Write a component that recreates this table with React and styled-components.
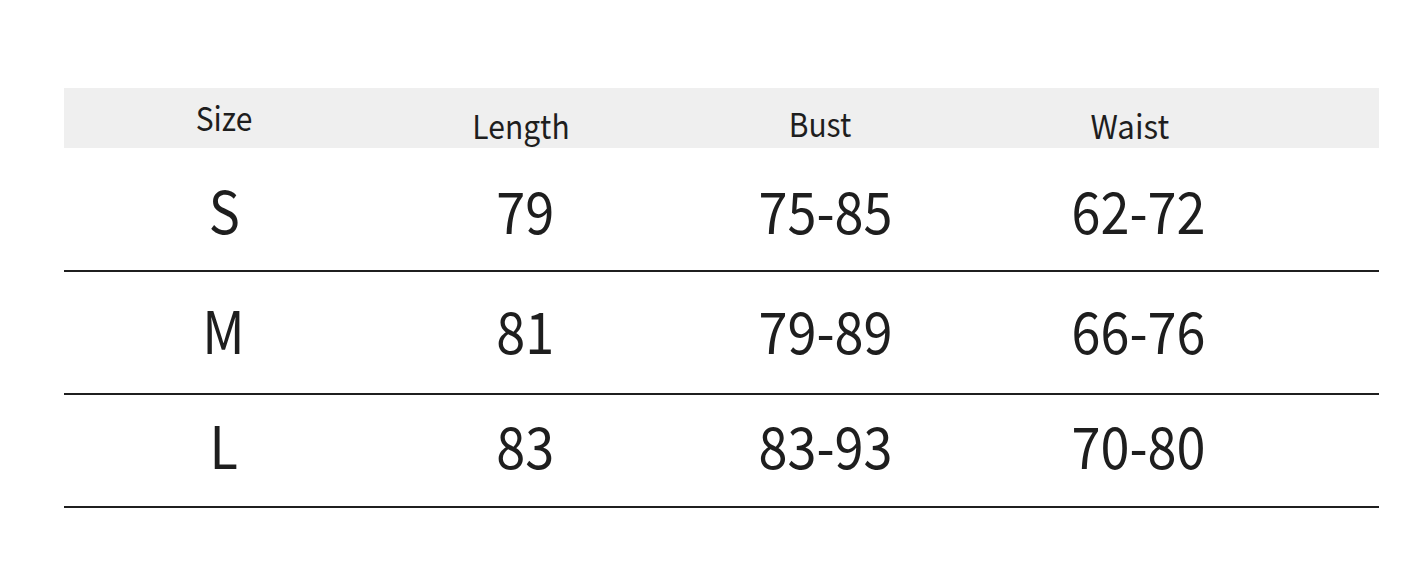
import React from "react";
import styled, { createGlobalStyle } from "styled-components";

const Global = createGlobalStyle`
  html, body { margin: 0; padding: 0; background: #ffffff; }
  body { font-family: "Noto Sans CJK SC", "Noto Sans", sans-serif; color: #222; }
`;

const Page = styled.div`
  width: 1409px;
  height: 588px;
  padding: 88px 30px 0 64px;
  box-sizing: border-box;
`;

const Table = styled.div`
  width: 1315px;
  display: flex;
  flex-direction: column;
`;

const cols = "320px 274px 324px 296px 1fr";

const HeadRow = styled.div`
  display: grid;
  grid-template-columns: ${cols};
  height: 60px;
  background: #efefef;
`;

const HeadCell = styled.div`
  display: flex;
  justify-content: center;
  align-items: flex-start;
  padding-top: ${(p) => p.$top}px;
  padding-left: ${(p) => p.$dx || 0}px;
  font-size: 30px;
  line-height: 1;
  color: #1e1e1e;
  span { display: inline-block; transform: scale(${(p) => p.$sx || 1}, 1.1); }
`;

const Row = styled.div`
  display: grid;
  grid-template-columns: ${cols};
  height: ${(p) => p.$h}px;
  padding-bottom: ${(p) => p.$pb}px;
  box-sizing: border-box;
  border-bottom: 2px solid #1f1f1f;
  & { height: ${(p) => p.$h + 2}px; }
`;

const Cell = styled.div`
  display: flex;
  justify-content: center;
  align-items: center;
  padding-left: ${(p) => p.$dx || 0}px;
  font-size: 58px;
  line-height: 1;
  color: #1e1e1e;
  span { display: inline-block; transform: scaleX(0.9); }
`;

const heads = [
  { t: "Size", top: 14, dx: 0 },
  { t: "Length", top: 22, dx: -2 },
  { t: "Bust", top: 20, dx: -5 },
  { t: "Waist", top: 22, dx: -12, sx: 1.04 },
];

const rows = [
  { h: 122, pb: 0, v: ["S", "79", "75-85", "62-72"] },
  { h: 121, pb: 8, v: ["M", "81", "79-89", "66-76"] },
  { h: 111, pb: 14, v: ["L", "83", "83-93", "70-80"] },
];

const dxs = [0, 8, 10, 16];

export default function App() {
  return (
    <>
      <Global />
      <Page>
        <Table>
          <HeadRow>
            {heads.map((h) => (
              <HeadCell key={h.t} $top={h.top} $dx={h.dx} $sx={h.sx}>
                <span>{h.t}</span>
              </HeadCell>
            ))}
            <div />
          </HeadRow>
          {rows.map((r, i) => (
            <Row key={i} $h={r.h} $pb={r.pb}>
              {r.v.map((v, j) => (
                <Cell key={j} $dx={dxs[j]}>
                  <span>{v}</span>
                </Cell>
              ))}
              <div />
            </Row>
          ))}
        </Table>
      </Page>
    </>
  );
}
